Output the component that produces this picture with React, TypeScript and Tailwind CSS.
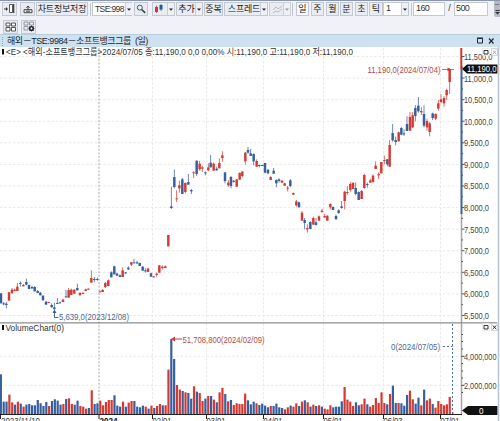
import clsx from 'clsx';
import type { ReactNode } from 'react';

const RED = '#d33a33';
const BLUE = '#365f9e';
const FONT = '"Liberation Sans", "Noto Sans CJK KR", sans-serif';

// Candle rows: x, high, body top, body bottom, low. Positive x is a rising
// candle, negative x a falling one. Values are in thirds of a pixel.
const segments = [
  {
    x: 0,
    y: 180,
    rows: [
      [-3, 340, 340, 370, 370], [-11, 366, 370, 373, 376], [-19, 366, 371, 375, 385], [27, 336, 337, 362, 362],
      [36, 324, 329, 340, 340], [44, 326, 329, 333, 333], [52, 309, 320, 333, 333], [-61, 304, 309, 312, 320],
      [70, 312, 315, 319, 319], [-79, 296, 306, 314, 316], [-87, 314, 315, 327, 327], [-96, 317, 321, 325, 327],
      [-104, 318, 321, 334, 334], [-113, 330, 333, 339, 339], [-121, 336, 338, 346, 346], [-129, 346, 347, 361, 361],
      [-138, 363, 365, 374, 374], [146, 365, 366, 369, 369], [-155, 370, 375, 382, 382], [-163, 368, 382, 387, 392],
      [-172, 354, 369, 371, 371], [-180, 365, 367, 370, 370], [189, 356, 359, 366, 366], [-198, 330, 349, 351, 353],
      [206, 324, 330, 353, 353], [214, 326, 329, 345, 345], [223, 328, 329, 341, 341], [-232, 311, 324, 331, 331],
      [240, 336, 339, 346, 346], [249, 336, 339, 342, 342], [257, 326, 328, 333, 333], [265, 325, 326, 329, 329],
      [274, 271, 294, 308, 308], [-283, 291, 297, 300, 306], [-292, 292, 297, 300, 302], [300, 332, 334, 337, 337],
      [308, 327, 330, 336, 336], [316, 306, 309, 321, 324], [325, 298, 301, 318, 318], [-334, 274, 277, 292, 292],
      [-343, 257, 259, 283, 283], [-351, 278, 281, 287, 287], [-360, 283, 286, 291, 291], [368, 262, 271, 291, 291],
      [-377, 276, 277, 280, 282], [-385, 259, 263, 268, 270], [394, 246, 247, 254, 258], [-402, 236, 247, 250, 250],
      [-411, 242, 247, 250, 252], [-419, 248, 249, 258, 258], [-428, 258, 260, 272, 272], [-436, 265, 271, 273, 278],
      [444, 263, 266, 276, 276], [-453, 278, 280, 290, 290], [461, 288, 289, 292, 292], [470, 278, 281, 285, 290],
      [478, 255, 256, 278, 278], [487, 256, 260, 264, 268], [496, 256, 259, 264, 264],
    ],
  },
  {
    x: 150,
    y: 130,
    rows: [
      [55, 315, 315, 349, 349], [-64, 170, 229, 234, 237], [-73, 119, 141, 171, 175], [80, 181, 205, 208, 216],
      [88, 152, 166, 175, 188], [-97, 144, 148, 192, 192], [106, 157, 159, 186, 190], [-115, 132, 156, 164, 164],
      [-124, 177, 180, 184, 192], [131, 124, 127, 130, 144], [-140, 92, 92, 132, 138], [149, 93, 101, 118, 122],
      [157, 108, 112, 116, 126], [-166, 124, 127, 130, 136], [175, 100, 112, 121, 124], [-182, 75, 98, 112, 112],
      [191, 97, 101, 122, 122], [-200, 110, 116, 121, 122], [208, 85, 99, 115, 115], [217, 64, 76, 84, 96],
      [-225, 127, 127, 153, 160], [235, 150, 158, 166, 170], [-243, 138, 141, 168, 175], [251, 150, 152, 156, 158],
      [260, 147, 148, 170, 170], [269, 127, 129, 149, 149], [277, 123, 125, 138, 142], [286, 66, 68, 94, 104],
      [-294, 51, 60, 68, 71], [-302, 57, 70, 78, 78], [-311, 70, 72, 94, 106], [320, 88, 93, 110, 110],
      [-328, 104, 105, 108, 112], [-337, 104, 105, 108, 108], [-345, 99, 99, 128, 130], [-354, 118, 119, 130, 133],
      [362, 139, 141, 150, 150], [-371, 114, 122, 131, 131], [-379, 148, 150, 160, 172], [-387, 145, 148, 153, 158],
      [396, 150, 152, 158, 158], [404, 158, 160, 167, 167], [413, 168, 173, 176, 184], [-421, 147, 151, 168, 172],
      [430, 188, 189, 194, 194], [439, 210, 214, 226, 230], [-447, 215, 217, 232, 232], [456, 243, 248, 272, 272],
      [-464, 264, 270, 279, 298], [472, 283, 294, 298, 308],
    ],
  },
  {
    x: 290,
    y: 130,
    rows: [
      [-61, 274, 276, 297, 297], [70, 260, 264, 284, 284], [-78, 264, 277, 285, 287], [87, 256, 259, 272, 272],
      [96, 236, 242, 246, 248], [104, 252, 258, 262, 264], [112, 256, 257, 272, 272], [121, 220, 222, 232, 238],
      [-129, 229, 231, 240, 240], [-138, 254, 258, 268, 268], [-146, 238, 241, 249, 251], [-155, 213, 229, 234, 236],
      [164, 182, 185, 213, 238], [172, 168, 186, 189, 194], [181, 156, 162, 180, 185], [189, 156, 159, 177, 177],
      [-197, 157, 174, 192, 196], [-206, 184, 186, 210, 210], [215, 180, 183, 207, 207], [223, 131, 135, 174, 176],
      [-232, 158, 162, 165, 173], [241, 146, 151, 158, 158], [249, 133, 137, 156, 158], [257, 94, 107, 117, 117],
      [266, 127, 132, 136, 147], [274, 96, 96, 130, 130], [283, 77, 90, 93, 103], [-292, 87, 88, 103, 108],
    ],
  },
  {
    x: 360,
    y: 40,
    rows: [
      [89, 300, 315, 380, 380], [-98, 252, 279, 301, 305], [-107, 290, 300, 306, 316], [116, 275, 277, 304, 304],
      [-124, 261, 264, 284, 286], [-132, 268, 280, 283, 288], [-141, 229, 252, 273, 273], [150, 216, 231, 272, 272],
      [158, 216, 226, 262, 264], [-166, 195, 204, 228, 244], [-175, 171, 197, 214, 218], [184, 202, 213, 217, 225],
      [-192, 196, 222, 257, 262], [201, 236, 243, 262, 272], [209, 246, 250, 276, 289], [-218, 218, 220, 234, 240],
      [227, 220, 222, 236, 240], [235, 180, 190, 206, 212], [243, 162, 178, 186, 190], [252, 168, 174, 190, 200],
      [260, 146, 150, 166, 180], [269, 84, 88, 126, 162],
    ],
  },
];

// Bar heights in thirds of a pixel, negative for down days
const volumes = [
  -120, -38, -38, 59, 36, -29, 38, -32, 23, -29, -31, -27, -27, -43, -33, -25, -37, 25, -40, -45, -41, -29, 31, -46,
  48, 31, -29, -41, 25, 23, 17, -19, 72, -31, -33, 41, 27, 37, 43, 43, -57, -26, -23, 38, -23, 35, 40, -40, -23, -21,
  -26, 23, -17, 26, -19, 25, 31, -27, 27, 134, -226, -166, 88, 74, -70, 66, -64, -47, 84, -68, 64, 40, -47, 55, -55,
  44, -36, 66, 79, -61, 39, -43, 28, 33, 31, 31, 62, -42, -30, -38, 33, -28, -32, -26, -21, 25, -25, -32, -21, -19,
  15, 21, -26, 23, 33, -25, 38, -42, 36, -23, 29, -25, 27, -23, 17, 15, 27, -21, -23, -23, -39, 82, 44, 38, 25, -36,
  -27, 30, 47, -30, 23, 28, 49, 34, 66, 34, -30, 61, -86, -34, 34, -33, -26, -58, 71, 45, -32, -50, 27, -74, 42, 47,
  -31, 20, 40, 31, 27, 30, 52,
];

const months = [
  { x: 152.5, label: '02/01' },
  { x: 206.5, label: '03/01' },
  { x: 263.5, label: '04/01' },
  { x: 323.5, label: '05/01' },
  { x: 383.5, label: '06/03' },
  { x: 440.5, label: '07/01' },
];

const prices = [
  '11,500,0', '11,000,0', '10,500,0', '10,000,0', '9,500,0', '9,000,0', '8,500,0',
  '8,000,0', '7,500,0', '7,000,0', '6,500,0', '6,000,0', '5,500,0',
];

function Btn({ className, children }: { className?: string; children?: ReactNode }) {
  return (
    <button
      className={clsx(
        'flex h-[14px] shrink-0 items-center justify-center overflow-hidden whitespace-nowrap border border-[#c3c9d3] bg-[#e9edf3] text-[9px] leading-none text-[#222]',
        className
      )}
    >
      {children}
    </button>
  );
}

function Arrow({ className = 'text-[#222]' }: { className?: string }) {
  return (
    <span className={clsx('flex h-full w-[7px] shrink-0 items-center justify-center border-l border-[#c9ced7] bg-[#edf0f5]', className)}>
      <svg width="4" height="3" viewBox="0 0 4 3" fill="currentColor">
        <path d="M0 .5h4L2 2.7z" />
      </svg>
    </span>
  );
}

function Sep({ className }: { className?: string }) {
  return <span className={clsx('h-[13px] w-px shrink-0 bg-[#c3c8d0]', className)} />;
}

function Toolbar() {
  return (
    <div className="h-[34px] shrink-0 border-t border-[#8b96aa] bg-[#f0f2f7] pt-px">
      <div className="flex h-[14px] items-center pl-[2px]">
        <Btn className="w-[15px]">
          <svg width="11" height="10" viewBox="0 0 11 10" fill="none" stroke="#333">
            <path d="M0 5h3" />
            <path d="M2 3l2 2-2 2z" fill="#333" stroke="none" />
            <path d="M5.5.5h3v8h-3z" fill="#fff" strokeWidth=".8" />
            <path d="M9.7 0v9" strokeWidth="1.2" />
          </svg>
        </Btn>
        <Btn className="ml-[3px] w-[15px]">
          <svg width="10" height="9" viewBox="0 0 10 9" fill="none" stroke="#333" strokeWidth=".9">
            <path d="M5 5V1M3.3 2.7L5 1l1.7 1.7M1 4.7h8v3H1zM3 6.2h4" />
          </svg>
        </Btn>
        <Btn className="ml-px w-[52px] tracking-[-0.2px]">차트정보저장</Btn>
        <Sep className="ml-[2px]" />
        <div className="ml-px flex h-[14px] w-[40px] shrink-0 items-center border border-[#c3c9d3] bg-white pl-[2px] text-[8.5px] leading-none text-[#333]">
          <span className="w-[30px] shrink-0 tracking-[-0.6px]">TSE:998</span>
          <Arrow />
        </div>
        <Btn className="ml-[2px] w-[14px]">
          <svg width="10" height="10" viewBox="0 0 10 10" fill="none" stroke="#444">
            <circle cx="3.8" cy="3.6" r="2.5" fill="#e2f2fa" strokeWidth=".9" />
            <path d="M5.7 5.6l3.5 3.3" strokeWidth="1.6" />
          </svg>
        </Btn>
        <Btn className="ml-[4px] w-[23px] justify-end">
          <svg className="mr-[3px]" width="10" height="10" viewBox="0 0 10 10">
            <path d="M2.5 1.5V9M7 0v7" stroke="#555" strokeWidth=".7" />
            <path d="M1 3h3v5H1z" fill="#dc3038" />
            <path d="M5.5 1h3v4.5h-3z" fill="#29579d" />
          </svg>
          <Arrow />
        </Btn>
        <Btn className="ml-px w-[27px] justify-between pl-[1px]">
          추가
          <Arrow />
        </Btn>
        <Btn className="ml-px w-[19px]">중복</Btn>
        <Btn className="ml-px w-[44px] justify-between pl-[3px]">
          <span className="tracking-[-0.2px]">스프레드</span>
          <Arrow />
        </Btn>
        <Btn className="ml-px w-[22px] justify-between border-[#d0d2d6] bg-[#e4e5e8] pl-[2px]">
          <svg width="10" height="9" viewBox="0 0 10 9" fill="none" stroke="#b8babd">
            <path d="M0 5l3-3 2 2 4-3M0 8l3-2 2 1 4-3" />
          </svg>
          <Arrow className="text-[#999]" />
        </Btn>
        <Sep className="ml-px" />
        <Btn className="ml-[3px] w-[13px] border-[#5f9ac9] bg-[#f6fafd]">일</Btn>
        <Btn className="ml-[2px] w-[13px]">주</Btn>
        <Btn className="ml-[2px] w-[13px]">월</Btn>
        <Btn className="ml-px w-[13px]">분</Btn>
        <Btn className="ml-[2px] w-[13px]">초</Btn>
        <Btn className="ml-[1px] w-[14px]">틱</Btn>
        <div className="flex h-[14px] w-[26px] shrink-0 items-center justify-between border border-[#c3c9d3] bg-white pl-[2px] text-[9px] text-[#333]">
          1
          <Arrow />
        </div>
        <Sep className="ml-[2px]" />
        <div className="ml-px flex h-[14px] w-[32px] shrink-0 items-center border border-[#c3c9d3] bg-white pl-[2px] text-[9px] tracking-[-0.6px] text-[#333]">160</div>
        <span className="w-[9px] shrink-0 text-center text-[9px] text-[#333]">/</span>
        <div className="flex h-[14px] w-[34px] shrink-0 items-center border border-[#c3c9d3] bg-white pl-[1px] text-[9px] tracking-[-0.6px] text-[#333]">500</div>
        <svg className="ml-auto shrink-0" width="6" height="16" viewBox="0 0 6 16">
          <path d="M0 0h6v16H1L0 14z" fill="#b6bac4" />
          <path d="M1.5 3.5h1M3.5 3.5h1M1.5 9.5h4" stroke="#333" />
          <path d="M1 11h5l-2.500 2.500z" fill="#333" />
        </svg>
      </div>
      <div className="mt-[4px] flex h-[13px] items-center gap-[3px] pl-[3px]">
        <Btn className="h-[13px] w-[15px]">
          <svg width="12" height="10" viewBox="0 0 12 10" fill="#fff" stroke="#444" strokeWidth=".9">
            <path d="M1 1h4v3H1zM6.500 1h4v3h-4zM1 5.500h4v3.500H1zM6.500 5.500h4v3.500h-4z" />
          </svg>
        </Btn>
        <Btn className="h-[13px] w-[15px]">
          <svg width="12" height="11" viewBox="0 0 12 11" fill="none" stroke="#8b9099" strokeWidth=".9">
            <path d="M1 1h4v3H1zM6.500 1h4v3h-4zM1 5.500h4v3.500H1z" />
            <circle cx="8.500" cy="7.500" r="1.800" stroke="#222" strokeWidth="1.500" />
            <path d="M8.500 4.500v6M5.500 7.500h6M6.400 5.400l4.200 4.200M10.600 5.400L6.400 9.600" stroke="#222" strokeWidth=".8" />
            <circle cx="8.500" cy="7.500" r=".9" fill="#fff" stroke="none" />
          </svg>
        </Btn>
      </div>
    </div>
  );
}

function TitleBar() {
  return (
    <div className="flex h-[13px] shrink-0 items-center border-t border-[#b9cddd] bg-[#cde2f0] pl-[2px] text-[9px] leading-none text-[#1c2733]">
      <span className="h-[9px] w-0 border-l border-dotted border-[#8fa4b6]" />
      <span className="ml-[4px] whitespace-pre tracking-[-0.46px]">해외－TSE:9984－소프트뱅크그룹  (일)</span>
      <svg className="ml-auto mr-[5px]" width="18" height="8" viewBox="0 0 18 8" fill="none" stroke="#1c2733">
        <path d="M.5 1.500h5v4.500h-5zM0 1h6" />
        <path d="M12 1.500l4.500 5M16.500 1.500l-4.500 5" strokeWidth="1.200" />
      </svg>
    </div>
  );
}

function PaneButtons({ y, faded }: { y: number; faded?: boolean }) {
  return (
    <g fill="#fff" stroke="#333">
      <path d={`M482.500 ${y}h7v7h-7z`} stroke="#ddd" strokeWidth=".6" />
      <path d={`M484 ${y + 2}h4v3.500h-4z`} />
      <path d={`M491.500 ${y}h6v7h-6z`} stroke="#bbb" strokeWidth=".6" />
      <path d={`M492.700 ${y + 2}l3.600 3.600M496.300 ${y + 2}l-3.600 3.600`} stroke={faded ? '#aaa' : '#222'} />
    </g>
  );
}

// Condensed chart text, w is the drawn width
function Label({ x, y, w, color = '#444', children }: { x: number; y: number; w: number; color?: string; children: string }) {
  return (
    <text
      transform={`translate(${x} ${y}) scale(.8 1)`}
      fill={color}
      textLength={w / 0.8}
      lengthAdjust="spacingAndGlyphs"
    >
      {children}
    </text>
  );
}

function Chart() {
  return (
    <svg className="block shrink-0" width="500" height="374" viewBox="0 47 500 374" fontSize="9.5" fontFamily={FONT}>
      <path d="M0 47h500v374H0z" fill="#fff" />

      {/* Grid */}
      <g stroke="#e3e3e5" strokeWidth=".8" strokeDasharray="2.500 1.800">
        {prices.map((p, i) => (
          <path key={p} d={`M0 ${56.500 + i * 21.580}H461`} />
        ))}
        <path d="M0 356.300H461M0 385.300H461" />
        {months.map((m) => (
          <path key={m.x} d={`M${m.x} 48V414`} />
        ))}
      </g>
      <path d="M99 48V414" stroke="#b5b5b9" strokeDasharray="2 1.600" strokeWidth="1.200" />

      {/* Candles */}
      {segments.map((s) => (
        <g key={`${s.x}-${s.y}`} transform={`translate(${s.x} ${s.y}) scale(.33333)`}>
          {s.rows.map(([sx, high, top, bottom, low]) => {
            const x = Math.abs(sx);
            const color = sx > 0 ? RED : BLUE;
            return (
              <g key={x} fill={color}>
                <rect x={x - 1.300} y={high} width="2.600" height={low - high} opacity=".85" />
                <rect x={x - 3.700} y={top} width="7.400" height={Math.max(bottom - top, 3)} />
              </g>
            );
          })}
        </g>
      ))}

      {/* Volume */}
      {volumes.map((v, i) => (
        <rect
          key={i}
          x={-0.250 + i * 2.841}
          y={414.300 - Math.abs(v) / 3}
          width="2.200"
          height={Math.abs(v) / 3}
          fill={v > 0 ? RED : BLUE}
        />
      ))}

      {/* Header line */}
      <path d="M2 49h2v5.500H2z" fill="#111" />
      <Label x={6} y={55.200} w={347} color="#333">
        {'<E> <해외-소프트뱅크그룹>2024/07/05 종:11,190,0 0,0 0,00% 시:11,190,0 고:11,190,0 저:11,190,0'}
      </Label>

      {/* High and low callouts */}
      <Label x={367.500} y={73} w={73} color="#b34a4a">11,190,0(2024/07/04)</Label>
      <path d="M442 69.500h12" stroke={RED} strokeWidth=".8" />
      <path d="M451 69.500l-3.500-2v4z" fill={RED} />
      <Label x={59} y={320} w={70} color="#4a6a91">5,639,0(2023/12/08)</Label>
      <path d="M54.500 311v6.500h4" fill="none" stroke="#4a6a91" />
      <path d="M54.500 309.500l2 3.500h-4z" fill="#365f9e" />

      {/* Price axis */}
      <path d="M461.500 213V414" stroke="#a5a5a8" strokeWidth="1.500" />
      <path d="M461.500 69V214" stroke="#3a62a8" strokeWidth="2" />
      <path d="M461.300 48V69" stroke="#d4322d" strokeWidth="2" />
      {prices.map((p, i) => (
        <g key={p}>
          <path
            d={`M462 ${56.500 + i * 21.580}h2.500${i < 12 ? `M461.500 ${67.300 + i * 21.580}h1.500` : ''}`}
            stroke="#555"
          />
          <Label x={464} y={60 + i * 21.580} w={i < 4 ? 28.500 : 25}>{p}</Label>
        </g>
      ))}
      <path d="M462 69l5-4.500h30.500v9H467z" fill="#111" />
      <Label x={467} y={72.400} w={29.500} color="#fff">11,190,0</Label>
      <PaneButtons y={48.500} faded />

      {/* Pane divider */}
      <path d="M0 322.800H497" stroke="#8d8d90" strokeWidth="1.300" />
      <path d="M2 325h2v5H2z" fill="#111" />
      <Label x={5.500} y={331.200} w={58.500} color="#333">VolumeChart(0)</Label>
      <PaneButtons y={323.500} />

      <Label x={182.500} y={342.700} w={82} color="#b34a4a">51,708,800(2024/02/09)</Label>
      <path d="M173 339h9" stroke={RED} />
      <path d="M171 339l4-2.500v5z" fill={RED} />
      <Label x={391} y={349.500} w={49} color="#4a6a91">0(2024/07/05)</Label>
      <path d="M443 346.500h9.500M452.500 324V414" fill="none" stroke="#4a6fa0" strokeDasharray="2 2" />
      <path d="M452 412.500h1.500v1.500H452z" fill={RED} />

      {/* Volume axis */}
      <path
        d="M461.500 334.500h1.500M461.500 341.500h1.500M461.500 349h1.500M461.500 356.300h3M461.500 363.500h1.500M461.500 371h1.500M461.500 378h1.500M461.500 385.300h3M461.500 392.500h1.500"
        stroke="#444"
      />
      <Label x={464} y={359.500} w={32.500}>4,000,000</Label>
      <Label x={464} y={388.500} w={32.500}>2,000,000</Label>
      <path d="M462 410.500l6-4.500h29.500v9H468z" fill="#111" />
      <Label x={479} y={413.700} w={4.500} color="#fff">0</Label>

      {/* Dates */}
      <path d="M0 414.500H462" stroke="#222" />
      <path d="M.5 414v5M99 414v5" stroke="#222" />
      <Label x={1} y={423.500} w={39} color="#333">2023/11/10</Label>
      <text x="99.500" y="423.500" fontWeight="bold" fill="#111" textLength="18" lengthAdjust="spacingAndGlyphs">
        2024
      </text>
      {months.map((m) => (
        <g key={m.label}>
          <path d={`M${m.x} 414v5`} stroke="#222" />
          <Label x={m.x} y={423.500} w={19} color="#333">{m.label}</Label>
        </g>
      ))}
      <path d="M498.500 47V421" stroke="#b9c3d4" strokeWidth="1.500" />
    </svg>
  );
}

export default function App() {
  return (
    <div className="flex h-[421px] w-[500px] flex-col overflow-hidden bg-white font-['Liberation_Sans','Noto_Sans_CJK_KR',sans-serif]">
      <Toolbar />
      <TitleBar />
      <Chart />
    </div>
  );
}
